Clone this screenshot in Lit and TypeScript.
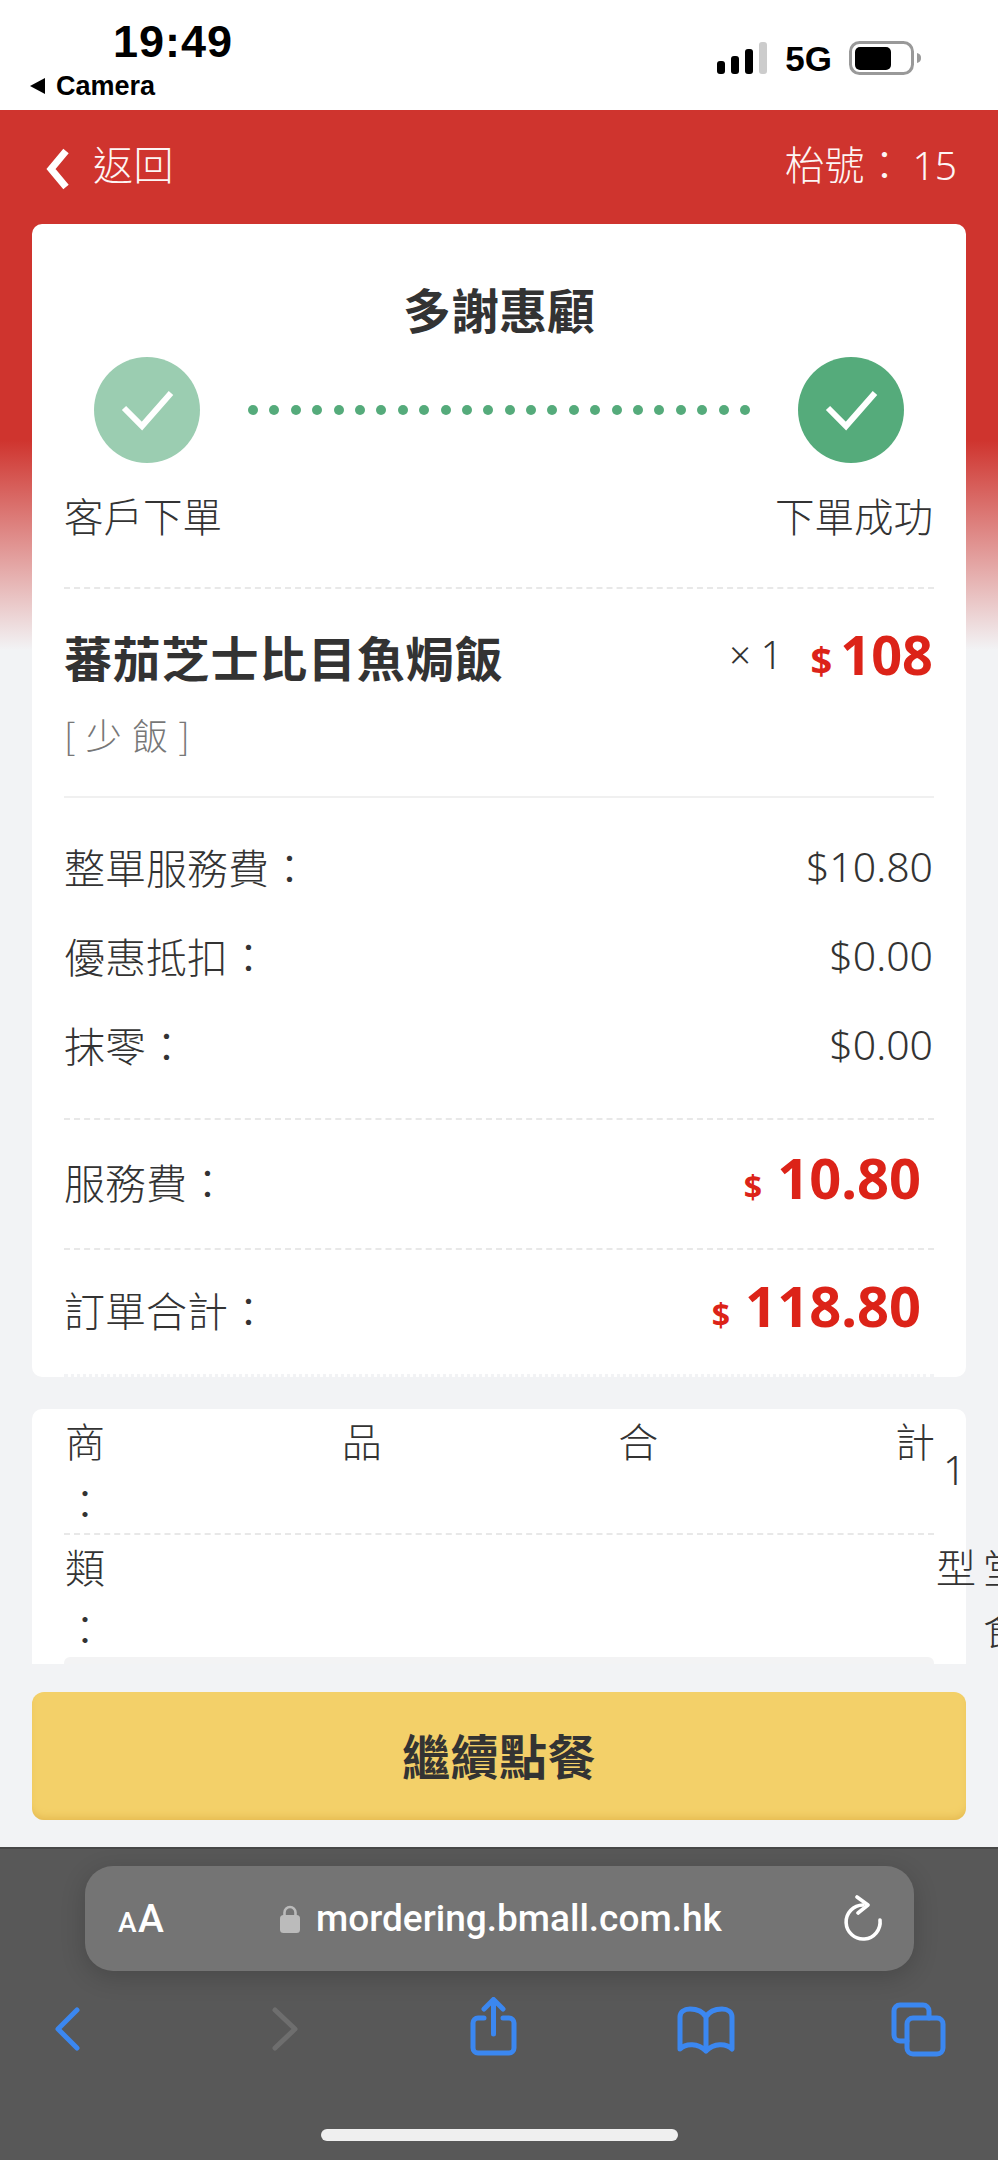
import { LitElement, html, css, svg } from "lit";
import { customElement } from "lit/decorators.js";

const check = svg`<path d="M30 51 L48 69 L77 36" fill="none" stroke="#fff" stroke-width="6"/>`;

@customElement("app-root")
export class AppRoot extends LitElement {
    fees = [
        ["整單服務費：", "$10.80"],
        ["優惠抵扣：", "$0.00"],
        ["抹零：", "$0.00"],
    ];

    render() {
        return html`
            <div class="status">
                <div class="status-left">
                    <div class="time">19:49</div>
                    <div class="camera"><span class="tri"></span>Camera</div>
                </div>
                <div class="status-right">
                    <svg width="51" height="32" viewBox="0 0 51 32">
                        <rect x="0" y="19" width="8" height="13" rx="3"/>
                        <rect x="14" y="14" width="8" height="18" rx="3"/>
                        <rect x="28" y="7" width="8" height="25" rx="3"/>
                        <rect x="42" y="0" width="8" height="32" rx="3" fill="#ccc"/>
                    </svg>
                    <span class="net">5G</span>
                    <svg width="73" height="34" viewBox="0 0 73 34">
                        <rect x="1.5" y="1.5" width="62" height="31" rx="9" fill="none" stroke="#999" stroke-width="3"/>
                        <rect x="6" y="6" width="36" height="23" rx="5"/>
                        <path d="M68 12 a6 5 0 0 1 4 5 a6 5 0 0 1 -4 5 z" fill="#999"/>
                    </svg>
                </div>
            </div>

            <div class="page">
                <div class="header">
                    <div class="back">
                        <svg class="chev" width="25" height="42" viewBox="0 0 25 42"><path d="M21 3 L6 21 L21 39" fill="none" stroke="#fff" stroke-width="7"/></svg>
                        <span>返回</span>
                    </div>
                    <div class="table">枱號：<span class="table-no">15</span></div>
                </div>

                <div class="scroll">
                    <div class="card">
                        <div class="title">多謝惠顧</div>
                        <div class="stepper">
                            <svg class="circle" width="106" height="106" viewBox="0 0 106 106"><circle cx="53" cy="53" r="53" fill="#9bcdb1"/>${check}</svg>
                            <div class="dots">${Array.from({ length: 24 }, () => html`<i></i>`)}</div>
                            <svg class="circle" width="106" height="106" viewBox="0 0 106 106"><circle cx="53" cy="53" r="53" fill="#55ab7b"/>${check}</svg>
                        </div>
                        <div class="step-labels"><span>客戶下單</span><span>下單成功</span></div>
                        <div class="rule"></div>

                        <div class="item">
                            <div class="item-name">蕃茄芝士比目魚焗飯</div>
                            <div class="item-right">
                                <span class="qty">× 1</span>
                                <span class="item-price"><small>$</small>108</span>
                            </div>
                        </div>
                        <div class="note">[ 少 飯 ]</div>
                        <div class="rule solid"></div>

                        <div class="fees">
                            ${this.fees.map(f => html`<div class="fee"><span>${f[0]}</span><span class="num">${f[1]}</span></div>`)}
                        </div>
                        <div class="rule"></div>
                        <div class="sum"><span>服務費：</span><span class="sum-val"><small>$</small>10.80</span></div>
                        <div class="rule"></div>
                        <div class="sum last"><span>訂單合計：</span><span class="sum-val"><small>$</small>118.80</span></div>
                        <div class="perf"></div>
                    </div>

                    <div class="card second">
                        <div class="broken">
                            <div class="broken-label">
                                <div class="spread"><span>商</span><span>品</span><span>合</span><span>計</span></div>
                                <div class="colon">：</div>
                            </div>
                            <div class="broken-val num">1</div>
                        </div>
                        <div class="rule"></div>
                        <div class="broken">
                            <div class="broken-label">
                                <div>類</div>
                                <div class="colon">：</div>
                            </div>
                            <div class="broken-val type">
                                <div>型堂</div>
                                <div class="type-2">食</div>
                            </div>
                        </div>
                        <div class="band"></div>
                    </div>
                </div>

                <div class="foot"><button class="go">繼續點餐</button></div>
            </div>

            <div class="safari">
                <div class="pill">
                    <span class="aa"><small>A</small>A</span>
                    <svg class="lock" width="20" height="28" viewBox="0 0 20 28">
                        <path d="M4.5 12 V7.5 a5.5 5.5 0 0 1 11 0 V12" fill="none" stroke="#bbb" stroke-width="2.6"/>
                        <rect x="0" y="10" width="20" height="18" rx="3.5" fill="#bbb"/>
                    </svg>
                    <span class="url">mordering.bmall.com.hk</span>
                    <svg class="reload" width="44" height="48" viewBox="0 0 44 48">
                        <path d="M22 10 A17 17 0 1 0 39 25" fill="none" stroke="#fff" stroke-width="3.6" stroke-linecap="round"/>
                        <path d="M16 2 L27 10 L17 18" fill="none" stroke="#fff" stroke-width="3.6" stroke-linecap="round" stroke-linejoin="round"/>
                    </svg>
                </div>
                <div class="tools">
                    <svg width="60" height="60" viewBox="0 0 60 60"><path class="blue" d="M40 13 L21 32 L40 51"/></svg>
                    <svg width="60" height="60" viewBox="0 0 60 60"><path d="M20 13 L40 32 L20 51" fill="none" stroke="#6e6e6e" stroke-width="5" stroke-linecap="round" stroke-linejoin="round"/></svg>
                    <svg width="60" height="60" viewBox="0 0 60 60"><path class="blue" d="M21 21 h-6 a5 5 0 0 0 -5 5 v25 a5 5 0 0 0 5 5 h31 a5 5 0 0 0 5 -5 v-25 a5 5 0 0 0 -5 -5 h-6 M30.5 37 V3 M21 12 L30.5 2.5 L40 12"/></svg>
                    <svg width="60" height="60" viewBox="0 0 60 60"><path class="blue" d="M30 20 C26 13 20 12 14 12 C8 12 4 15 4 20 V52 C10 46 22 46 30 54 C38 46 50 46 56 52 V20 C56 15 52 12 46 12 C40 12 34 13 30 20 Z M30 20 V54"/></svg>
                    <svg width="60" height="60" viewBox="0 0 60 60">
                        <path class="blue" d="M41 21 V14 a6 6 0 0 0 -6 -6 H12 a6 6 0 0 0 -6 6 V38 a6 6 0 0 0 6 6 H19"/>
                        <rect class="blue" x="19" y="21" width="36" height="36" rx="6"/>
                    </svg>
                </div>
                <div class="home"></div>
            </div>
        `;
    }

    static styles = css`
        :host {
            display: flex;
            flex-direction: column;
            width: 998px;
            height: 2160px;
            overflow: hidden;
            font-family: "Noto Sans CJK TC", "Noto Sans", sans-serif;
            font-weight: 300;
            color: #333;
            background: #f2f3f5;
        }

        .status {
            height: 110px;
            flex: none;
            display: flex;
            justify-content: space-between;
            background: #fff;
            color: #000;
            font-family: "Liberation Sans", sans-serif;
            font-weight: 700;
        }

        .status-left { padding: 18px 0 0 30px; }
        .time { font-size: 45px; line-height: 48px; margin-left: 83px; letter-spacing: 1px; }
        .camera { font-size: 27px; line-height: 40px; display: flex; align-items: center; }
        .tri {
            width: 0;
            height: 0;
            border-top: 8px solid transparent;
            border-bottom: 8px solid transparent;
            border-right: 15px solid #000;
            margin-right: 11px;
        }

        .status-right {
            display: flex;
            align-items: center;
            padding: 14px 76px 0 0;
            height: 88px;
            gap: 17px;
        }
        .net { font-size: 35px; line-height: 1; }

        .page {
            flex: 1;
            min-height: 0;
            display: flex;
            flex-direction: column;
            background: linear-gradient(#cf342e 330px, #f2f3f5 540px);
        }

        .header {
            height: 114px;
            flex: none;
            display: flex;
            align-items: center;
            justify-content: space-between;
            padding: 0 41px 0 45px;
            color: #fdf6f5;
            font-size: 40px;
        }
        .back { display: flex; align-items: center; gap: 23px; }
        .back span { padding-bottom: 8px; letter-spacing: 0.5px; }
        .chev { margin-top: 4px; }
        .table { padding-bottom: 8px; }
        .table-no { font-family: "Noto Sans", sans-serif; font-size: 39px; margin-left: 8px; }

        .scroll {
            height: 1440px;
            flex: none;
            overflow: hidden;
            padding: 0 32px;
        }

        .card {
            background: #fff;
            border-radius: 10px;
            margin-bottom: 32px;
        }

        .title {
            padding-top: 50px;
            font-size: 48px;
            line-height: 68px;
            font-weight: 700;
            text-align: center;
        }

        .stepper {
            margin-top: 15px;
            padding: 0 62px;
            display: flex;
            align-items: center;
            justify-content: space-between;
        }
        .dots { display: flex; gap: 11.4px; }
        .dots i { width: 10px; height: 10px; border-radius: 50%; background: #55ab7b; }

        .step-labels {
            margin-top: 24px;
            padding: 0 33px 0 32px;
            display: flex;
            justify-content: space-between;
            font-size: 39.5px;
            line-height: 56px;
        }

        .rule {
            margin: 0 32px;
            border-top: 2px dashed #e8e8e8;
        }
        .rule.solid { border-top: 2px solid #f0f0f0; margin-top: 37px; }
        .step-labels + .rule { margin-top: 44px; }

        .item {
            padding: 32px 33px 0 32px;
            display: flex;
            justify-content: space-between;
            align-items: center;
            height: 70px;
        }
        .item-name { font-size: 48px; line-height: 70px; font-weight: 700; letter-spacing: 0.8px; }
        .item-right { display: flex; align-items: center; font-family: "Noto Sans", sans-serif; padding-bottom: 4px; }
        .qty { font-size: 38px; margin-right: 28px; }
        .item-price { font-size: 54px; font-weight: 700; color: #dc2318; }
        .item-price small { font-size: 38px; margin-right: 8px; }

        .note {
            margin: 18px 33px 0 32px;
            font-size: 36px;
            line-height: 50px;
            letter-spacing: 1.2px;
            color: #777;
        }

        .fees { padding: 38px 33px 44px 32px; display: flex; flex-direction: column; gap: 29px; }
        .fee {
            display: flex;
            justify-content: space-between;
            font-size: 41px;
            line-height: 60px;
        }
        .num { font-family: "Noto Sans", sans-serif; }

        .sum {
            height: 64px;
            padding: 29px 45px 35px 32px;
            display: flex;
            justify-content: space-between;
            align-items: center;
            font-size: 41px;
            line-height: 64px;
        }
        .sum.last { padding-top: 27px; padding-bottom: 33px; }
        .sum-val {
            padding-top: 2px;
            font-family: "Noto Sans", sans-serif;
            font-size: 56px;
            font-weight: 700;
            color: #dc2318;
        }
        .sum-val small { font-size: 32px; margin-right: 15px; }

        .perf {
            margin: 0 32px;
            height: 0;
            border-top: 3px dotted #f2f3f5;
        }

        .second { border-radius: 10px 10px 0 0; margin: 0; }
        .broken {
            display: flex;
            font-size: 40px;
            line-height: 62px;
            padding-left: 33px;
        }
        .broken-label { flex: none; width: 870px; }
        .spread { display: flex; justify-content: space-between; }
        .colon { width: 40px; }
        .broken-val { flex: none; margin-left: 8px; line-height: 70px; margin-top: 26px; }
        .type { margin: 0 0 0 1px; line-height: 62px; letter-spacing: 7px; white-space: nowrap; }
        .type-2 { padding-left: 47px; }
        .band {
            margin: -2px 32px 0;
            height: 40px;
            background: #f3f3f4;
            border-radius: 6px 6px 0 0;
        }

        .foot { flex: none; padding: 28px 32px 26px; }
        .go {
            display: block;
            width: 100%;
            height: 128px;
            padding: 0 0 5px;
            border: none;
            border-radius: 12px;
            background: #f3d069;
            box-shadow: inset 0 -6px 8px -4px #e3b74e;
            color: #333;
            font: 700 48px "Noto Sans CJK TC", sans-serif;
            letter-spacing: 0.5px;
        }

        .safari {
            flex: none;
            height: 313px;
            box-sizing: border-box;
            background: #585858;
            border-top: 2px solid #474747;
            padding-top: 17px;
            color: #fff;
        }

        .pill {
            margin: 0 84px 0 85px;
            height: 105px;
            border-radius: 28px;
            background: #747474;
            box-shadow: 0 6px 24px rgba(0, 0, 0, 0.18);
            display: flex;
            align-items: center;
            padding: 0 29px 0 33px;
            font-family: "Roboto", sans-serif;
            font-weight: 500;
        }
        .aa { font-size: 39px; width: 49px; white-space: nowrap; letter-spacing: 0.5px; }
        .aa small { font-size: 28px; margin-right: 1px; }
        .lock { margin-left: 113px; }
        .url { margin-left: 16px; font-size: 37px; }
        .reload { margin-left: auto; }

        .tools {
            display: grid;
            grid-template-columns: 218px 208px 213px 212px 60px;
            padding: 26px 0 0 37px;
        }
        .tools svg { display: block; }
        .blue {
            fill: none;
            stroke: #3b87f0;
            stroke-width: 5;
            stroke-linecap: round;
            stroke-linejoin: round;
        }

        .home {
            width: 357px;
            height: 12px;
            margin: 72px 0 0 321px;
            border-radius: 6px;
            background: #efefef;
        }
    `;
}
